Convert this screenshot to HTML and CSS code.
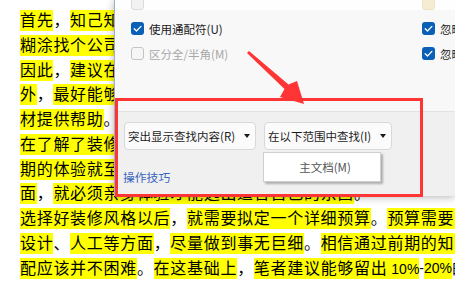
FILE: index.html
```html
<!DOCTYPE html>
<html lang="zh-CN">
<head>
<meta charset="utf-8">
<title>查找和替换</title>
<link rel="stylesheet" href="styles.css">
</head>
<body>
<div class="doc">
  <div class="line"><span class="hl">首先</span><span>，</span><span class="hl">知己知彼</span><span>，</span><span class="hl">了解自己真正的需求</span><span>，</span><span class="hl">不要稀里</span></div>
  <div class="line"><span class="hl">糊涂找个公司就开始装修后悔莫及的事情时有发生</span></div>
  <div class="line"><span class="hl">因此</span><span>，</span><span class="hl">建议在装修之前多看看案例多做准备工作</span></div>
  <div class="line"><span class="hl">外</span><span>，</span><span class="hl">最好能够实地考察已经完工的样板房为选</span></div>
  <div class="line"><span class="hl">材提供帮助</span><span>。</span></div>
  <div class="line"><span class="hl">在了解了装修的基本流程和常见问题以后</span><span>，</span><span class="hl">前</span></div>
  <div class="line"><span class="hl">期的体验就至关重要了想要真正了解材料的方方</span></div>
  <div class="line"><span class="hl">面</span><span>，</span><span class="hl">就必须亲身体验才能选出适合自己的东西</span><span>。</span></div>
  <div class="line"><span class="hl">选择好装修风格以后</span><span>，</span><span class="hl">就需要拟定一个详细预算</span><span>。</span><span class="hl">预算需要包括</span></div>
  <div class="line"><span class="hl">设计</span><span>、</span><span class="hl">人工等方面</span><span>，</span><span class="hl">尽量做到事无巨细</span><span>。</span><span class="hl">相信通过前期的知识</span></div>
  <div class="line"><span class="hl">配应该并不困难</span><span>。</span><span class="hl">在这基础上</span><span>，</span><span class="hl">笔者建议能够留出<span class="lat"> 10%</span></span><span class="lat">-</span><span class="hl lat">20%</span><span>的预算</span></div>
</div>

<div class="dialog">
  <div class="options">
    <div class="opts">
      <div class="opt"><span class="box ghost"></span></div>
      <div class="opt"><span class="box beige"></span></div>
      <div class="opt"><span class="box on"><svg viewBox="0 0 13 13"><path d="M3.2 6.7 L5.5 9 L9.9 4.4"/></svg></span><span>使用通配符(U)</span></div>
      <div class="opt"><span class="box on"><svg viewBox="0 0 13 13"><path d="M3.2 6.7 L5.5 9 L9.9 4.4"/></svg></span><span>忽略标点符号(S)</span></div>
      <div class="opt off"><span class="box"></span><span>区分全/半角(M)</span></div>
      <div class="opt"><span class="box on"><svg viewBox="0 0 13 13"><path d="M3.2 6.7 L5.5 9 L9.9 4.4"/></svg></span><span>忽略空格(W)</span></div>
    </div>
  </div>
  <div class="actions">
    <div class="btns">
      <div class="btn btn-wide"><span>突出显示查找内容(R)</span><span class="caret"></span></div>
      <div class="btn btn-narrow"><span>在以下范围中查找(I)</span><span class="caret"></span></div>
    </div>
    <div class="tips">操作技巧</div>
  </div>
</div>

<div class="menu">主文档(M)</div>

<div class="mark"></div>

<svg class="arrow" viewBox="0 0 455 286" width="455" height="286">
  <polygon points="247,53 249,51 288.5,84.5 297,81 304,104 280,97 284.5,89"/>
</svg>
</body>
</html>
```

FILE: styles.css
```css
html, body {
  margin: 0;
  padding: 0;
}

body {
  width: 455px;
  height: 286px;
  overflow: hidden;
  position: relative;
  background: #ffffff;
}

/* document behind the dialog */
.doc {
  padding: 10px 0 0 20px;
  font-family: "Liberation Sans", "Noto Sans CJK SC", sans-serif;
  font-size: 16px;
  letter-spacing: 0.7px;
  color: #000;
}

.line {
  display: flex;
  height: 24.75px;
  white-space: nowrap;
}

.line > span {
  flex-shrink: 0;
  height: 21px;
  line-height: 21px;
}

.hl {
  background: #ffff00;
}

.lat {
  font-size: 14px;
  letter-spacing: 0;
}

/* find dialog */
.dialog {
  position: absolute;
  left: 114px;
  top: 0;
  width: 341px;
  height: 196px;
  box-sizing: border-box;
  border-left: 1px solid #9fb0c4;
  background: #f8f8f8;
  box-shadow: 0 1px 8px rgba(0, 0, 0, 0.3);
  font-family: "Noto Sans CJK SC", sans-serif;
  font-size: 11.5px;
  color: #1b1b1b;
  display: flex;
  flex-direction: column;
}

.options {
  height: 111px;
  flex-shrink: 0;
  overflow: hidden;
  background: linear-gradient(#fefefe 0, #fefefe 10px, #f8f8f8 10px);
}

.opts {
  display: grid;
  grid-template-columns: 291px 1fr;
  row-gap: 12px;
  margin-top: -3px;
  padding-left: 16px;
}

.opt {
  display: flex;
  align-items: center;
  gap: 5px;
  height: 13px;
  white-space: nowrap;
}

.opt.off {
  color: #a8a8a8;
}

.box {
  width: 13px;
  height: 13px;
  box-sizing: border-box;
  border-radius: 3px;
  border: 1px solid #c4c4c4;
  background: #f6f6f6;
  flex-shrink: 0;
  display: block;
}

.box.ghost {
  border-color: #dcdcdc;
  background: #f2f2f2;
}

.box.beige {
  border-color: #efe3c4;
  background: #f6ecd2;
}

.box.on {
  border: none;
  background: #0a5fb6;
}

.box svg {
  display: block;
  width: 13px;
  height: 13px;
  fill: none;
  stroke: #ffffff;
  stroke-width: 1.3;
  stroke-linecap: round;
  stroke-linejoin: round;
}

.actions {
  flex: 1;
  background: #f0f0f0;
  border-top: 1px solid #e3e3e3;
  padding: 10px 0 0 9px;
}

.btns {
  display: flex;
  gap: 8px;
}

.btn {
  height: 28px;
  box-sizing: border-box;
  border: 1px solid #d8d8d8;
  border-radius: 4px;
  background: #fbfbfb;
  display: flex;
  align-items: center;
  justify-content: space-between;
  padding: 0 5px 0 3px;
  white-space: nowrap;
}

.btn-wide {
  width: 132px;
}

.btn-narrow {
  width: 128px;
}

.caret {
  width: 0;
  height: 0;
  flex-shrink: 0;
  border-left: 3.5px solid transparent;
  border-right: 3.5px solid transparent;
  border-top: 4px solid #1b1b1b;
}

.tips {
  margin: 19px 0 0 -1px;
  line-height: 16px;
  font-size: 11.8px;
  color: #3a66bb;
}

/* open dropdown */
.menu {
  position: absolute;
  left: 263px;
  top: 152px;
  width: 118px;
  height: 30px;
  box-sizing: border-box;
  background: #ffffff;
  border: 1px solid #cfcfcf;
  box-shadow: 2px 2px 2px rgba(0, 0, 0, 0.28);
  display: flex;
  align-items: center;
  justify-content: center;
  padding-left: 6px;
  font-family: "Noto Sans CJK SC", sans-serif;
  font-size: 11.5px;
  color: #555555;
}

/* red annotation */
.mark {
  position: absolute;
  left: 115px;
  top: 98px;
  width: 308px;
  height: 99px;
  box-sizing: border-box;
  border: 3px solid #ff3434;
}

.arrow {
  position: absolute;
  left: 0;
  top: 0;
  fill: #ff3434;
}
```
